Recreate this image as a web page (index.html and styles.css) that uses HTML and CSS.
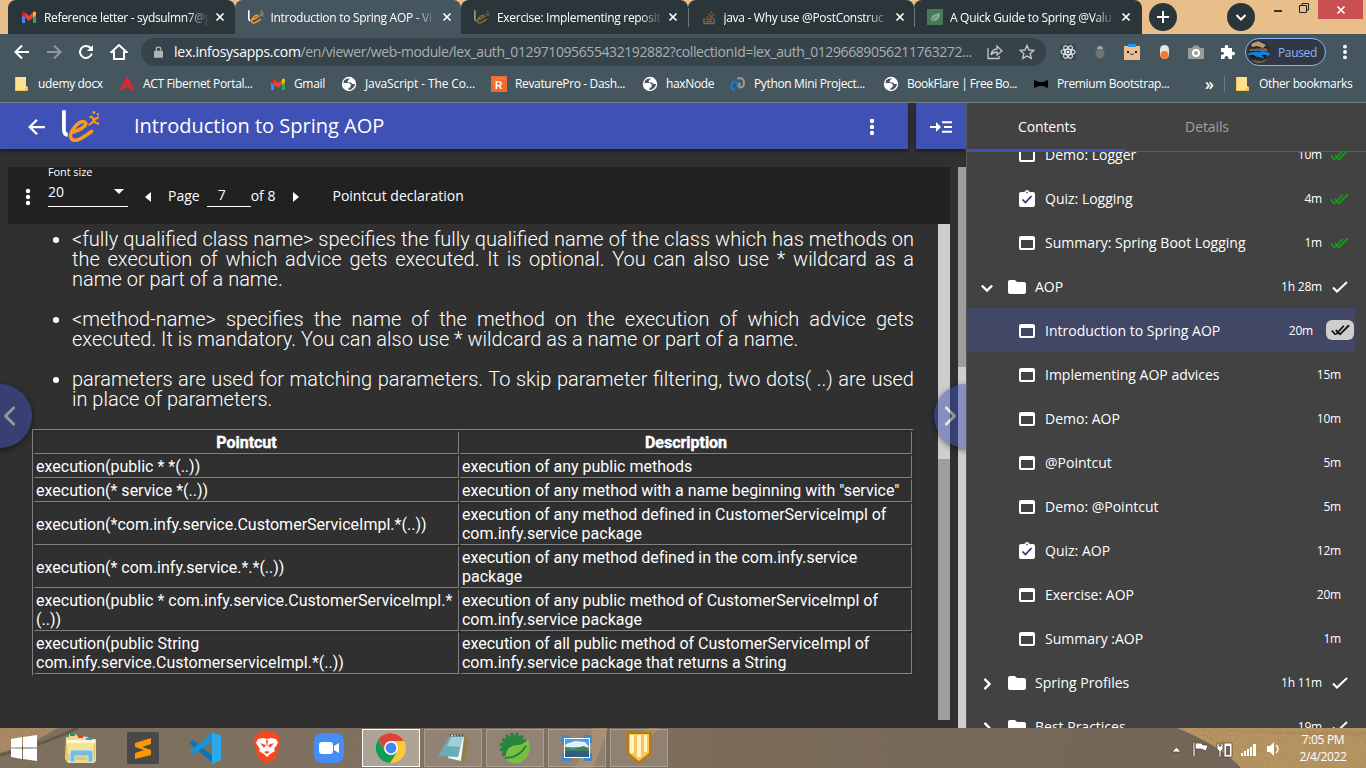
FILE: index.html
```html
<!DOCTYPE html>
<html lang="en">
<head>
<meta charset="utf-8">
<title>Introduction to Spring AOP</title>
<link rel="stylesheet" href="styles.css">
</head>
<body>
<svg class="defs" width="0" height="0">
  <symbol id="gmail" viewBox="0 0 16 16"><path fill="#4285f4" d="M1 5v8q0 1 1 1h2V7z"/><path fill="#34a853" d="M12 7v7h2q1 0 1-1V5z"/><path fill="#ea4335" d="M4 3.500 8 7l4-3.500V8.500L8 12 4 8.500z"/><path fill="#c5221f" d="M1 4q0-2 2-1.500L4 3.300v5.200L1 6z"/><path fill="#fbbc04" d="M15 4q0-2-2-1.500l-1 .8v5.200L15 6z"/></symbol>
  <symbol id="lex" viewBox="0 0 36 30"><path d="M1.800 0v18q0 5 3.700 5.500" fill="none" stroke="#fff" stroke-width="3.600"/><path d="M9 21q4-.5 10-4 6-4 2-6-4-1-9 5-6 8-3 11 3 4 12-2 4-2.500 7-5" fill="none" stroke="#f79a1e" stroke-width="3.400" stroke-linecap="round"/><path d="M26 7q3-2 3.500 1.500T35 13M35 7q-3 0-5 3t-5 4" fill="none" stroke="#f79a1e" stroke-width="2"/><path fill="#f79a1e" d="M29 1h2.500v2.500H29zM33 3h2v2h-2z"/></symbol>
  <symbol id="close" viewBox="0 0 10 10"><path d="m1.500 1.500 7 7m0-7-7 7" stroke="#fff" stroke-width="1.700"/></symbol>
  <symbol id="globe" viewBox="0 0 16 16"><circle cx="8" cy="8" r="7.200" fill="#fff"/><path fill="#45565f" d="M3 4.500Q5 2 9 2.500L7 4.500q-1 1 0 2h3l1.500 1.500H14q0 2-2 4l-2 1.500L7.500 14V12l1.500-1.500L8 9H4L2.500 7.500z"/><path fill="#fff" d="M3 7h4.500L10 8.500 9.500 11 8 12 6 10H3zM8 3.500h3l1 2-3 .8z"/></symbol>
  <symbol id="folder-y" viewBox="0 0 16 16"><path fill="#fde293" d="M2 1h10v9l2 1v4H2z"/><path fill="#f2c746" d="M1 1h1v13h9v-2l3-1v4H1z"/></symbol>
  <symbol id="back" viewBox="0 0 16 16"><path d="M15 8H2M8 1.500 1.500 8 8 14.500" fill="none" stroke="currentColor" stroke-width="2"/></symbol>
  <symbol id="dots" viewBox="0 0 6 18"><circle cx="3" cy="3" r="2.200"/><circle cx="3" cy="9" r="2.200"/><circle cx="3" cy="15" r="2.200"/></symbol>
  <symbol id="win" viewBox="0 0 16 14"><path fill-rule="evenodd" fill="#fff" d="M2 0h12q2 0 2 2v10q0 2-2 2H2q-2 0-2-2V2Q0 0 2 0zM2 4v8h12V4z"/></symbol>
  <symbol id="quiz" viewBox="0 0 16 18"><path fill="#fff" d="M2 2h3.500Q6 0 8 0t2.500 2H14q2 0 2 2v11q0 2-2 2H2q-2 0-2-2V4q0-2 2-2z"/><path d="m3.500 9.500 3 3 6-6.500" fill="none" stroke="#303564" stroke-width="1.700"/><circle cx="8" cy="2.500" r=".8" fill="#424242"/></symbol>
  <symbol id="folder" viewBox="0 0 18 14"><path fill="#fff" d="M2 0h5l2 2h7q2 0 2 2v8q0 2-2 2H2q-2 0-2-2V2Q0 0 2 0z"/></symbol>
  <symbol id="chev" viewBox="0 0 14 14"><path d="m4.500 1.800 5 5.200-5 5.200" fill="none" stroke="#fff" stroke-width="2.400"/></symbol>
  <symbol id="check" viewBox="0 0 16 12"><path d="m1 6.500 4 4L15 1" fill="none" stroke="#fff" stroke-width="2"/></symbol>
  <symbol id="checks" viewBox="0 0 20 12"><path d="m.8 6.500 4 4.500M5 6l4.500 4.500L19 1M5.500 10.500l8-9" fill="none" stroke="currentColor" stroke-width="1.900"/></symbol>
</svg>

<header class="chrome">
  <div class="tabstrip">
    <div class="tab first"><svg class="fav"><use href="#gmail"/></svg><span class="tab-text">Reference letter - sydsulmn7@g</span><svg class="x"><use href="#close"/></svg></div>
    <div class="tab active"><svg class="fav"><use href="#lex"/></svg><span class="tab-text">Introduction to Spring AOP - Vi</span><svg class="x"><use href="#close"/></svg></div>
    <div class="tab"><svg class="fav dim"><use href="#lex"/></svg><span class="tab-text">Exercise: Implementing reposit</span><svg class="x"><use href="#close"/></svg></div>
    <div class="tab split"><svg class="fav" viewBox="0 0 16 16"><path d="M3 9v5.500h10V9" fill="none" stroke="#697276" stroke-width="1.300"/><path d="M5 12.500h6M5 10l6 .8M5.500 7.500l6 2M7 5l5 3.500M9.500 2l3.500 5" stroke="#87532c" stroke-width="1.300"/></svg><span class="tab-text">java - Why use @PostConstruc</span><svg class="x"><use href="#close"/></svg></div>
    <div class="tab split last"><svg class="fav" viewBox="0 0 16 16"><path fill="#46795a" d="M0 0h16v16H0z"/><path fill="#90a99b" d="M4 12Q3 5 13 4q0 8-7 8zl-1 1z"/><path d="M4 13q1-4 6-6" stroke="#46795a" fill="none"/></svg><span class="tab-text">A Quick Guide to Spring @Valu</span><svg class="x"><use href="#close"/></svg></div>
    <span class="round plus"><svg width="28" height="28"><path d="M8 14h12M14 8v12" stroke="#fff" stroke-width="2"/></svg></span>
    <span class="round down"><svg width="28" height="28"><path d="m9.500 12 4.500 4.500 4.500-4.500" fill="none" stroke="#fff" stroke-width="2"/></svg></span>
    <svg class="winctl" width="40" height="18"><path d="M1 12h8" stroke="#333" stroke-width="2"/><path d="M26.500 6.500h7v7h-7zM29 6V4.500h6.500V11H34" fill="none" stroke="#222"/></svg>
    <span class="closewin"><svg width="10" height="10"><use href="#close"/></svg></span>
  </div>

  <div class="toolbar">
    <svg class="nav-i" width="16" height="16"><use href="#back"/></svg>
    <svg class="nav-i fwd" width="16" height="16"><use href="#back"/></svg>
    <svg class="nav-i" width="16" height="16" viewBox="0 0 16 16"><path d="M13.800 9.500A6 6 0 1 1 12.500 4" fill="none" stroke="#fff" stroke-width="2"/><path fill="#fff" d="M15 1v6H9z"/></svg>
    <svg class="nav-i" width="18" height="18" viewBox="0 0 18 18"><path d="M1.500 9 9 2l7.500 7H14v7H4V9z" fill="none" stroke="#fff" stroke-width="2"/></svg>
    <div class="omnibox">
      <svg width="9" height="12" viewBox="0 0 10 13"><path fill="#aeb4b7" d="M1 5h8q1 0 1 1v6q0 1-1 1H1q-1 0-1-1V6q0-1 1-1z"/><path d="M2.500 5V3Q2.500 1 5 1t2.500 2v2" fill="none" stroke="#aeb4b7" stroke-width="1.500"/></svg>
      <span class="url"><b>lex.infosysapps.com</b><i>/en/viewer/web-module/lex_auth_012971095655432192882?collectionId=lex_auth_01296689056211763272...</i></span>
      <svg class="share" width="16" height="16" viewBox="0 0 16 16"><path d="M1 4v10.500h11V12M4 11q1-6 6-6V2l5 5-5 4V8Q6 8 4 11z" fill="none" stroke="#c2c7c9" stroke-width="1.300"/></svg>
      <svg width="16" height="16" viewBox="0 0 16 16"><path d="m8 1.500 2 4.500 4.800.4-3.600 3.200 1 4.800L8 12l-4.200 2.400 1-4.800L1.200 6.400 6 6z" fill="none" stroke="#c2c7c9" stroke-width="1.400"/></svg>
    </div>
    <div class="exts">
      <svg width="16" height="16" viewBox="0 0 16 16"><path fill="#3b4850" d="M0 0h16v16H0z"/><g fill="none" stroke="#e4e7e8" stroke-width="1.100"><ellipse cx="8" cy="8" rx="7" ry="2.700"/><ellipse cx="8" cy="8" rx="7" ry="2.700" transform="rotate(60 8 8)"/><ellipse cx="8" cy="8" rx="7" ry="2.700" transform="rotate(120 8 8)"/></g><circle cx="8" cy="8" r="1.300" fill="#fff"/></svg>
      <svg width="16" height="16" viewBox="0 0 16 16"><path d="M2 4l12 9M14 4 2 13M1 8.500h14" stroke="#55636b"/><ellipse cx="8" cy="9.500" rx="4.300" ry="5" fill="#707477"/><path fill="#a4a9ab" d="M5 5q0-3 3-3t3 3z"/></svg>
      <svg width="16" height="16" viewBox="0 0 16 16"><path fill="#eebf97" d="M0 2h16v14H0z"/><path fill="#2196f3" d="M4 0h8v3H4z"/><path fill="#222" d="M3 7h2v2H3zm8 0h2v2h-2z"/><path d="M6 9.500q1 2 2 .5 1 1.500 2-.5" fill="none" stroke="#333"/></svg>
      <svg width="16" height="16" viewBox="0 0 16 16"><rect x="4" y="1" width="9" height="14" rx="4.500" fill="#e6e6e6"/><circle cx="8.500" cy="11" r="4" fill="#f47b2c"/></svg>
      <svg width="16" height="16" viewBox="0 0 16 16"><path fill="#9b9b9b" d="M1 4h3l2-2.500h4L12 4h3q1 0 1 1v9q0 1-1 1H1q-1 0-1-1V5q0-1 1-1z"/><circle cx="8" cy="9" r="3" fill="none" stroke="#fff" stroke-width="2"/></svg>
      <svg width="16" height="16" viewBox="0 0 16 16"><path fill="#fff" d="M1 4h4q-1-3 1.500-3T8 4h4v4q3-1 3 1.500T12 11v4H8.500q0-3-2-3t-2 3H1v-4q3 0 3-1.700T1 8z"/></svg>
    </div>
    <div class="profile"><svg width="22" height="22" viewBox="0 0 22 22"><clipPath id="av"><circle cx="11" cy="11" r="11"/></clipPath><g clip-path="url(#av)"><path fill="#252a2e" d="M0 0h22v22H0z"/><path fill="#bb9972" d="m3 3 7-3 8 4-3 3-6-2-5 1z"/><path fill="#755e49" d="m1 8 17-1 3 3H1zM3 19l10 1 9-3v5H5z"/><path fill="#187fd4" d="m0 12 7-1 3-2 6 1 6 2v2l-7 3-9-2-6-1z"/><path fill="#111" d="m2 14 4 0 3 3-5-1zM13 14h6l-2 3zM7 11l3-1 4 1z"/></g></svg><span>Paused</span></div>
    <svg class="menu" width="6" height="16" fill="#fff"><use href="#dots"/></svg>
  </div>

  <div class="bookmarks">
    <a class="bm b1"><svg><use href="#folder-y"/></svg>udemy docx</a>
    <a class="bm b2"><svg viewBox="0 0 16 16"><path fill="#e5252c" d="M8 0 16 15 8 11.500 0 15zM8 8l-1.500 3L8 10.500l1.500.5z"/></svg>ACT Fibernet Portal...</a>
    <a class="bm b3"><svg><use href="#gmail"/></svg>Gmail</a>
    <a class="bm b4"><svg><use href="#globe"/></svg>JavaScript - The Co...</a>
    <a class="bm b5"><svg viewBox="0 0 16 16"><path fill="#f26a2e" d="M0 0h16v16H0z"/><text x="4" y="13" class="rev">R</text><path d="M3 4.500q6-4 12-1" fill="none" stroke="#f9a783" stroke-dasharray="1"/></svg>RevaturePro - Dash...</a>
    <a class="bm b6"><svg><use href="#globe"/></svg>haxNode</a>
    <a class="bm b7"><svg viewBox="0 0 16 16"><path d="M5 14.500Q0 13 2 8q1-3 4-2 3 2 .5 5" fill="none" stroke="#1d78bd" stroke-width="2.400"/><path d="M7 2.500q7-1.500 7 4 0 5-4 5-2-2 0-5" fill="none" stroke="#8d979c" stroke-width="2.200"/></svg>Python Mini Project...</a>
    <a class="bm b8"><svg><use href="#globe"/></svg>BookFlare | Free Bo...</a>
    <a class="bm b9"><svg viewBox="0 0 16 16"><path d="m1 4 5 2h4l5-2v8l-5-2H6l-5 2z"/></svg>Premium Bootstrap...</a>
    <span class="more">»</span>
    <a class="bm other"><svg><use href="#folder-y"/></svg>Other bookmarks</a>
  </div>
</header>

<main class="page">
  <section class="viewer">
    <div class="bars">
      <div class="bar title">
        <svg width="18" height="18" class="back"><use href="#back"/></svg>
        <svg width="38" height="32" class="logo"><use href="#lex"/></svg>
        <h1>Introduction to Spring AOP</h1>
        <svg width="6" height="18" fill="#fff" class="kebab"><use href="#dots"/></svg>
      </div>
      <div class="bar side"><svg width="22" height="12" viewBox="0 0 22 12"><path d="M0 6h9M12 1.200h10M14 6h8M12 10.800h10" stroke="#fff" stroke-width="2"/><path fill="#fff" d="M6 1v10l5-5z"/></svg></div>
    </div>
    <div class="body">
      <div class="doc">
        <div class="pager">
          <svg width="6" height="18" fill="#fff" class="pdots"><use href="#dots"/></svg>
          <div class="fs"><small>Font size</small><div class="select"><span>20</span><svg width="10" height="5"><path fill="#fff" d="M0 0h10L5 5z"/></svg></div></div>
          <svg class="prev" width="6" height="10"><path fill="#fff" d="M6 0v10L0 5z"/></svg>
          <span class="lbl">Page</span><span class="num">7</span><span class="lbl">of 8</span>
          <svg class="next" width="6" height="10"><path fill="#fff" d="M0 0v10l6-5z"/></svg>
          <span class="lbl ptitle">Pointcut declaration</span>
        </div>
        <div class="scroll">
          <article>
            <ul>
              <li>&lt;fully qualified class name&gt; specifies the fully qualified name of the class which has methods on the execution of which advice gets executed. It is optional. You can also use * wildcard as a name or part of a name.</li>
              <li>&lt;method-name&gt; specifies the name of the method on the execution of which advice gets executed. It is mandatory. You can also use * wildcard as a name or part of a name.</li>
              <li>parameters are used for matching parameters. To skip parameter filtering, two dots( ..) are used in place of parameters.</li>
            </ul>
            <table>
              <tr><th class="c1">Pointcut</th><th>Description</th></tr>
              <tr><td>execution(public * *(..))</td><td>execution of any public methods</td></tr>
              <tr><td>execution(* service *(..))</td><td>execution of any method with a name beginning with "service"</td></tr>
              <tr><td>execution(*com.infy.service.CustomerServiceImpl.*(..))</td><td>execution of any method defined in CustomerServiceImpl of<br>com.infy.service package</td></tr>
              <tr><td>execution(* com.infy.service.*.*(..))</td><td>execution of any method defined in the com.infy.service<br>package</td></tr>
              <tr><td>execution(public * com.infy.service.CustomerServiceImpl.*<br>(..))</td><td>execution of any public method of CustomerServiceImpl of<br>com.infy.service package</td></tr>
              <tr><td>execution(public String<br>com.infy.service.CustomerserviceImpl.*(..))</td><td>execution of all public method of CustomerServiceImpl of<br>com.infy.service package that returns a String</td></tr>
            </table>
          </article>
          <div class="sb inner"><i></i></div>
        </div>
      </div>
      <div class="sb outer"><i></i></div>
    </div>
    <span class="go left"><svg width="12" height="20"><path d="m10.500 1-9 9 9 9" fill="none" stroke="#fff" stroke-width="2.800"/></svg></span>
    <span class="go right"><svg width="12" height="20"><path d="m1.500 1 9 9-9 9" fill="none" stroke="#fff" stroke-width="2.800"/></svg></span>
  </section>

  <aside class="toc">
    <div class="toc-tabs"><span class="current">Contents</span><span>Details</span></div>
    <div class="list">
      <div class="row"><svg class="ic win"><use href="#win"/></svg><span>Demo: Logger</span><time>10m</time><svg class="dbl"><use href="#checks"/></svg></div>
      <div class="row"><svg class="ic quiz"><use href="#quiz"/></svg><span>Quiz: Logging</span><time>4m</time><svg class="dbl"><use href="#checks"/></svg></div>
      <div class="row"><svg class="ic win"><use href="#win"/></svg><span>Summary: Spring Boot Logging</span><time>1m</time><svg class="dbl"><use href="#checks"/></svg></div>
      <div class="row mod"><svg class="chev open"><use href="#chev"/></svg><svg class="fold"><use href="#folder"/></svg><span>AOP</span><time>1h 28m</time><svg class="ck"><use href="#check"/></svg></div>
      <div class="row sel"><svg class="ic win"><use href="#win"/></svg><span>Introduction to Spring AOP</span><time>20m</time><b class="badge"><svg class="dbl"><use href="#checks"/></svg></b></div>
      <div class="row plain"><svg class="ic win"><use href="#win"/></svg><span>Implementing AOP advices</span><time>15m</time></div>
      <div class="row plain"><svg class="ic win"><use href="#win"/></svg><span>Demo: AOP</span><time>10m</time></div>
      <div class="row plain"><svg class="ic win"><use href="#win"/></svg><span>@Pointcut</span><time>5m</time></div>
      <div class="row plain"><svg class="ic win"><use href="#win"/></svg><span>Demo: @Pointcut</span><time>5m</time></div>
      <div class="row plain"><svg class="ic quiz"><use href="#quiz"/></svg><span>Quiz: AOP</span><time>12m</time></div>
      <div class="row plain"><svg class="ic win"><use href="#win"/></svg><span>Exercise: AOP</span><time>20m</time></div>
      <div class="row plain"><svg class="ic win"><use href="#win"/></svg><span>Summary :AOP</span><time>1m</time></div>
      <div class="row mod"><svg class="chev"><use href="#chev"/></svg><svg class="fold"><use href="#folder"/></svg><span>Spring Profiles</span><time>1h 11m</time><svg class="ck"><use href="#check"/></svg></div>
      <div class="row mod"><svg class="chev"><use href="#chev"/></svg><svg class="fold"><use href="#folder"/></svg><span>Best Practices</span><time>19m</time><svg class="ck"><use href="#check"/></svg></div>
    </div>
  </aside>
</main>

<footer class="taskbar">
  <svg class="sand" width="1366" height="40">
    <defs><filter id="grain"><feTurbulence type="fractalNoise" baseFrequency=".45" numOctaves="2"/><feColorMatrix values="0 0 0 0 .2  0 0 0 0 .15  0 0 0 0 .1  1.600 0 0 0 -.7"/></filter><linearGradient id="gr"><stop offset="0" stop-color="#7d705f"/><stop offset=".4" stop-color="#817160"/><stop offset=".55" stop-color="#7a6b59"/><stop offset="1" stop-color="#706457"/></linearGradient></defs>
    <path fill="url(#gr)" d="M0 0h1366v40H0z"/>
    <path fill="#a98a66" d="M0 0h58L35 13 0 25z"/>
    <path d="M0 27Q40 18 78 0" fill="none" stroke="#655849" stroke-width="3"/>
    <path fill="#b18a62" opacity=".6" d="m575 40 18-40h15l-15 40zM628 15l20-15h12l-32 30z"/>
    <path fill="#b79561" d="M1177 0h189v40h-125q-20-22-64-40z"/>
    <path d="M1200 0q60 5 166 3v5q-90 0-166-8z" fill="#a98858" opacity=".5"/>
    <path filter="url(#grain)" opacity=".4" d="M0 0h1366v40H0z"/>
  </svg>
  <div class="apps">
    <span class="app start"><svg width="28" height="26" viewBox="0 0 28 26"><path fill="#fff" d="m1 4 11-2v10.500H1zM13 2l14-2v12.500H13zM1 13.500h11V24L1 22zM13 13.500h14V26l-14-2z"/></svg></span>
    <span class="app"><svg width="32" height="32" viewBox="0 0 32 32"><path fill="#ead995" d="M1 5h3V2h7l1 2h3l8 1 1 2h7v22l-2 2H3L0 27z"/><path fill="#fff6c9" d="M2 8h28v3H2z"/><path fill="#e5c868" d="M1 12h29v16H1z"/><path fill="#f7e394" d="M2 11h27l-1 11H3z"/><path d="M5 3h5" stroke="#15a34a" stroke-width="2"/><path d="M13 5h5" stroke="#d43d32" stroke-width="2"/><path d="M21 7h6" stroke="#239ce0" stroke-width="2"/><path fill="#76bce1" stroke="#c4e9f8" d="M5 21q0-3 3-3h17q3 0 3 3v9h-5v-6H10v6H5z"/></svg></span>
    <span class="app"><svg width="32" height="32" viewBox="0 0 32 32"><rect width="32" height="32" rx="2" fill="#484848"/><path fill="#ff9800" d="m8 11 16-5v6l-9 3 9 3v5L8 27v-6l9-3-9-3z"/></svg></span>
    <span class="app"><svg width="32" height="32" viewBox="0 0 32 32"><path fill="#0877b9" d="m1 10 3-2 20 16v7L1 12z"/><path fill="#1594d7" d="m1 20 3 3 20-15V0L1 19z"/><path fill="#2aa9ee" d="m23 0 9 4v24l-9 4z"/></svg></span>
    <span class="app"><svg width="28" height="32" viewBox="0 0 28 32"><path fill="#f9471f" d="m7 0h14l3 3 2 1 1 6-4 16-9 6-9-6L1 10l1-6 2-1z"/><path fill="#fff" d="m5 7 5-1 4 1 4-1 5 1 2 4-4 6 1 2-5 3-3 3-3-3-5-3 1-2-4-6z"/><path fill="#f9471f" d="m7 11 6 2-2 3zM21 11l-6 2 2 3zM11 20l3-1 3 1-3 2zM13 8h2l-1 8z"/></svg></span>
    <span class="app"><svg width="30" height="30"><rect width="30" height="30" rx="8" fill="#488cf5"/><rect x="5" y="9" width="14" height="12" rx="3" fill="#fff"/><path fill="#fff" d="m20 13 5-3v10l-5-3z"/></svg></span>
    <span class="app run focused"><svg width="30" height="30" viewBox="0 0 30 30"><circle cx="15" cy="15" r="15" fill="#fdc93b"/><path fill="#db4437" d="M15 15V8h13A15 15 0 0 0 2.500 6.500L9 18z"/><path fill="#0f9d58" d="M2.500 6.500A15 15 0 0 0 14 30l7-11-6 3-6-3.500z"/><circle cx="15" cy="15" r="6.900" fill="#fff"/><circle cx="15" cy="15" r="5.400" fill="#4285f4"/></svg></span>
    <span class="app run"><svg width="30" height="28" viewBox="0 0 30 28"><path fill="#977c45" d="m26 3 4 2-3 22-6 0z"/><path fill="#eef5f6" d="m12 1 14 2-3 24-13-3z"/><path fill="#68acb6" d="M12 2h13l-5 21-20-1z"/><path fill="#b9dde1" opacity=".7" d="m13 3 12 0-3 10-13-1z"/><path d="M12 1h14" stroke="#555" stroke-dasharray="1 2" stroke-width="3"/></svg></span>
    <span class="app run"><svg width="32" height="32" viewBox="0 0 32 32"><circle cx="15" cy="15" r="12" fill="#28843d"/><circle cx="15" cy="15" r="12.500" fill="none" stroke="#28843d" stroke-width="4" stroke-dasharray="3 2"/><path fill="#79bf43" d="M7 25Q6 13 20 13q5-1 9-6 5 13-4 21-8 7-18 0z"/><path d="M6 26q14 0 21-12" fill="none" stroke="#28843d" stroke-width="2"/></svg></span>
    <span class="app run"><svg width="30" height="26" viewBox="0 0 30 26"><path fill="#398bd0" d="M0 0h8v8H0zM22 0h8v8h-8zM0 18h8v8H0zM22 18h8v8h-8z"/><path fill="#fff" d="M2 3h26v20H2z"/><path fill="#519edc" d="M3 4h24v18H3z"/><path fill="#e4f1f8" d="m4 9 9-3 10 1 4 5H3z"/><path fill="#438061" d="m3 12 8 2 7-2 4-1 5 3v3H3z"/><path fill="#315e80" d="M3 16h24v6H3z"/></svg></span>
    <span class="app run"><svg width="28" height="32" viewBox="0 0 28 32"><path fill="#b77b16" d="M1 0h26l-1 23-12 9-12-9z"/><path fill="#f3c75c" d="M4 2h20v19l-10 8-10-8z"/><path fill="#fff1c1" d="M5 3h4v18H5zM12 3h4v22h-4zM19 3h3v17h-3z"/></svg></span>
  </div>
  <svg class="tray" width="110" height="18" viewBox="0 0 110 18"><g fill="#fff" stroke="#514839" stroke-width=".8"><path d="m1 12 4.500-5 4.500 5z"/><path d="M22 2h2v15h-2zM24 3h6l2 2h5l-2 6-5-2h-6z"/><path d="M46 3h2v3h2V3h2v6l-2 2v6h-2v-6l-2-2zM53 3h8v14h-8z"/></g><path fill="#fff" d="M70 13h2v3h-2zM73 11h2v5h-2zM76 9h2v7h-2zM79 7h2v9h-2zM82 4h3v12h-3zM96 6h3l4-4v14l-4-4h-3z"/><path fill="#706355" d="M55 6h4v9h-4z"/><path d="M105 5q4 4 0 8" fill="none" stroke="#fff" stroke-width="1.300"/></svg>
  <div class="clock"><span>7:05 PM</span><span>2/4/2022</span></div>
</footer>
</body>
</html>
```
FILE: styles.css
```css
* { box-sizing: border-box; }
body { margin: 0; width: 1366px; height: 768px; overflow: hidden; background: #303030; color: #fff; font-family: "Open Sans", sans-serif; display: flex; flex-direction: column; }
svg { flex: none; display: block; }
.defs { position: absolute; }

/* browser frame */
.chrome { height: 103px; flex: none; background: #45565f; border-bottom: 1px solid #6c7e83; font-size: 12px; letter-spacing: -.35px; }
.tabstrip { height: 34px; display: flex; background: #e8be8b; align-items: flex-start; }
.tab { width: 226.500px; height: 34px; background: #2b363b; display: flex; align-items: center; padding-left: 13px; border-radius: 8px 8px 0 0; flex: none; }
.tab.first { margin-left: 8px; }
.tab.active { background: #45565f; }
.tab.last { width: 227.500px; }
.fav { width: 16px; height: 16px; margin-right: 7px; }
.fav.dim { opacity: .5; }
.tab-text { width: 167px; white-space: nowrap; overflow: hidden; -webkit-mask-image: linear-gradient(90deg, #000 143px, transparent 166px); mask-image: linear-gradient(90deg, #000 143px, transparent 166px); }
.active .tab-text, .tab.active ~ .tab .tab-text { letter-spacing: -.3px; }
.x { width: 10px; height: 10px; margin-left: 4px; }
.tab.split { background: linear-gradient(#6a777d, #6a777d) 0 8px / 1px 19px no-repeat #2b363b; }
.round { width: 28px; height: 28px; border-radius: 50%; background: #2b363b; margin-top: 3px; flex: none; }
.plus { margin-left: 7.500px; }
.down { margin-left: 50px; }
.winctl { margin-left: 18px; margin-top: -1px; }
.closewin { width: 45px; height: 19px; background: #c94f50; margin-left: 5px; display: flex; justify-content: center; align-items: center; }

.toolbar { height: 36px; display: flex; align-items: center; }
.nav-i { margin-left: 14px; color: #fff; }
.nav-i + .nav-i { margin-left: 16px; }
.fwd { transform: scaleX(-1); color: #8e999e; }
.omnibox { height: 28px; width: 905px; margin-left: 13px; border-radius: 14px; background: #36434a; display: flex; align-items: center; padding: 0 11px 0 13px; }
.url { font-size: 14px; letter-spacing: -.41px; margin-left: 11px; flex: 1; white-space: nowrap; line-height: 20px; margin-top: -1px; }
.url b, .url i { font-weight: 400; font-style: normal; }
.url b { letter-spacing: -.25px; }
.url i { color: #a9b0b3; }
.share { margin-right: 16px; }
.exts { display: flex; gap: 16px; margin-left: 14px; }
.profile { margin-left: 9px; width: 81px; height: 28px; border: 1.500px solid #8ab4f8; border-radius: 14px; background: #313843; display: flex; align-items: center; padding-left: 2px; color: #8ab4f8; gap: 8px; }
.menu { margin-left: 16px; }

.bookmarks { height: 32px; padding-left: 14px; display: flex; align-items: center; padding-bottom: 5px; }
.bm { display: flex; align-items: center; gap: 8px; white-space: nowrap; flex: none; line-height: 16px; }
.bm svg { width: 16px; height: 16px; }
.b1 { width: 105px; } .b2 { width: 151px; } .b3 { width: 71px; } .b4 { width: 150px; } .b5 { width: 151px; } .b6 { width: 88px; } .b7 { width: 153px; } .b8 { width: 150px; letter-spacing: -.5px; } .b9 { width: 172px; }
.b4 { letter-spacing: -.12px; }
.rev { font: 700 10px "Liberation Sans", sans-serif; fill: #fff; }
.more { font-size: 16px; width: 19px; line-height: 14px; font-weight: 600; }
.other { border-left: 1px solid #6c7e83; padding-left: 10px; }

/* page */
.page { display: flex; height: 625px; flex: none; }
.viewer { width: 966px; position: relative; overflow: hidden; }
.bars { display: flex; gap: 8px; height: 64px; }
.bar { height: 46px; background: #3f51b5; box-shadow: 0 2px 4px rgba(0,0,0,.45); display: flex; align-items: center; }
.title { width: 908px; padding-left: 28px; }
.back { margin-top: 2px; }
.logo { margin-left: 16px; margin-top: -1px; }
h1 { font-size: 20px; font-weight: 400; margin: 0 0 0 34px; flex: 1; line-height: 46px; }
.kebab { margin-right: 33px; margin-top: 2px; }
.side { width: 50px; padding: 2px 0 0 14px; }
.body { display: flex; height: 561px; padding-left: 8px; gap: 8px; }
.doc { width: 942px; }
.pager { height: 57px; background: #212121; display: flex; align-items: center; padding-left: 17px; font-size: 14px; }
.pdots { margin-top: 3px; }
.fs { margin-left: 17px; width: 80px; height: 57px; }
.fs small { display: block; font-size: 11px; line-height: 10px; letter-spacing: -.1px; }
.select { display: flex; justify-content: space-between; align-items: center; border-bottom: 1px solid #fff; height: 30px; padding: 0 4px 1px 0; }
.prev { margin: 3px 17px 0 17px; }
.num { width: 44px; height: 22px; margin-left: 7px; padding-left: 11px; border-bottom: 1px solid #fff; line-height: 20px; }
.next { margin: 3px 0 0 18px; }
.ptitle { margin-left: 33px; }
.scroll { height: 496px; display: flex; justify-content: space-between; }
article { width: 906px; padding: 5px 0 0 24px; font-family: Roboto, sans-serif; }
ul { margin: 0; padding-left: 40px; font-size: 20px; line-height: 20px; font-weight: 300; text-align: justify; }
li { margin-bottom: 20px; }
table { width: 882px; border: 1px solid #808080; border-right-color: #2a2a2a; border-bottom-color: #2a2a2a; border-spacing: 1px; font-size: 16px; line-height: 19px; table-layout: fixed; }
td, th { padding: 1px; border: 1px solid #808080; border-top-color: #2a2a2a; border-left-color: #2a2a2a; white-space: nowrap; }
td:last-child { letter-spacing: -.01px; }
th { -webkit-text-stroke: .4px #fff; letter-spacing: -.02px; }
.c1 { width: 425px; }
.sb { background: #9e9e9e; }
.sb i { display: block; background: #cecece; }
.inner { width: 12px; }
.inner i { height: 235px; }
.outer { width: 8px; padding-top: 200px; }
.outer i { height: 361px; }
.go { position: absolute; top: 281px; width: 64px; height: 64px; border-radius: 50%; background: #3f51b5; opacity: .5; display: flex; align-items: center; box-shadow: 0 2px 6px #000; }
.left { left: -32px; padding-left: 36px; }
.right { right: -32px; padding-left: 10px; }

/* contents panel */
.toc { width: 400px; background: #424242; border-left: 1px solid #575757; overflow: hidden; }
.toc-tabs { height: 49px; display: flex; border-bottom: 1px solid #5c5c5c; font-size: 14px; line-height: 48px; text-align: center; color: #a0a0a0; }
.toc-tabs span { width: 160px; height: 49px; letter-spacing: -.1px; }
.toc-tabs .current { color: #fff; background: linear-gradient(#3f51b5, #3f51b5) 0 100% / 159px 3px no-repeat; }
.list { height: 576px; overflow: hidden; padding-right: 11px; }
.row { height: 44px; display: flex; align-items: center; padding: 0 6px 0 52px; font-size: 14px; }
.row:first-child { margin-top: -20px; }
.row span { flex: 1; }
.ic { width: 16px; margin: 1px 10px 0 0; }
.win { height: 14px; }
.quiz { height: 18px; }
.row time { font-size: 12px; margin-right: 8px; letter-spacing: -.2px; }
.dbl { width: 19px; height: 12px; color: #169c1d; margin-top: 2px; }
.plain time { margin-right: 8px; }
.mod { padding-left: 13px; padding-right: 6px; }
.chev { width: 14px; height: 14px; margin-right: 14px; margin-top: 3px; }
.open { transform: rotate(90deg); }
.fold { width: 18px; height: 14px; margin: 1px 9px 0 0; }
.ck { width: 16px; height: 12px; margin: 1px 1px 0 2px; }
.sel { background: #424766; padding-right: 1px; }
.sel time { margin-right: 13px; }
.badge { width: 28px; height: 20px; border-radius: 6px; background: #cecece; display: flex; align-items: center; justify-content: center; }
.badge .dbl { color: #111; margin-top: 0; }

/* task bar */
.taskbar { height: 40px; flex: none; display: flex; position: relative; align-items: center; }
.sand { position: absolute; left: 0; top: 0; }
.apps { display: flex; position: relative; gap: 4px; width: 1171px; }
.app { width: 58px; height: 38px; display: flex; align-items: center; justify-content: center; }
.start { width: 48px; }
.run { border: 1px solid #aaa092; background: rgba(220,210,200,.2); }
.focused { border-color: #fff; background: rgba(230,225,220,.45); }
.tray { position: relative; margin-top: 2px; }
.clock { position: relative; margin-left: 14px; display: flex; flex-direction: column; align-items: center; width: 56px; font-size: 12px; line-height: 17px; letter-spacing: -.35px; }
```
